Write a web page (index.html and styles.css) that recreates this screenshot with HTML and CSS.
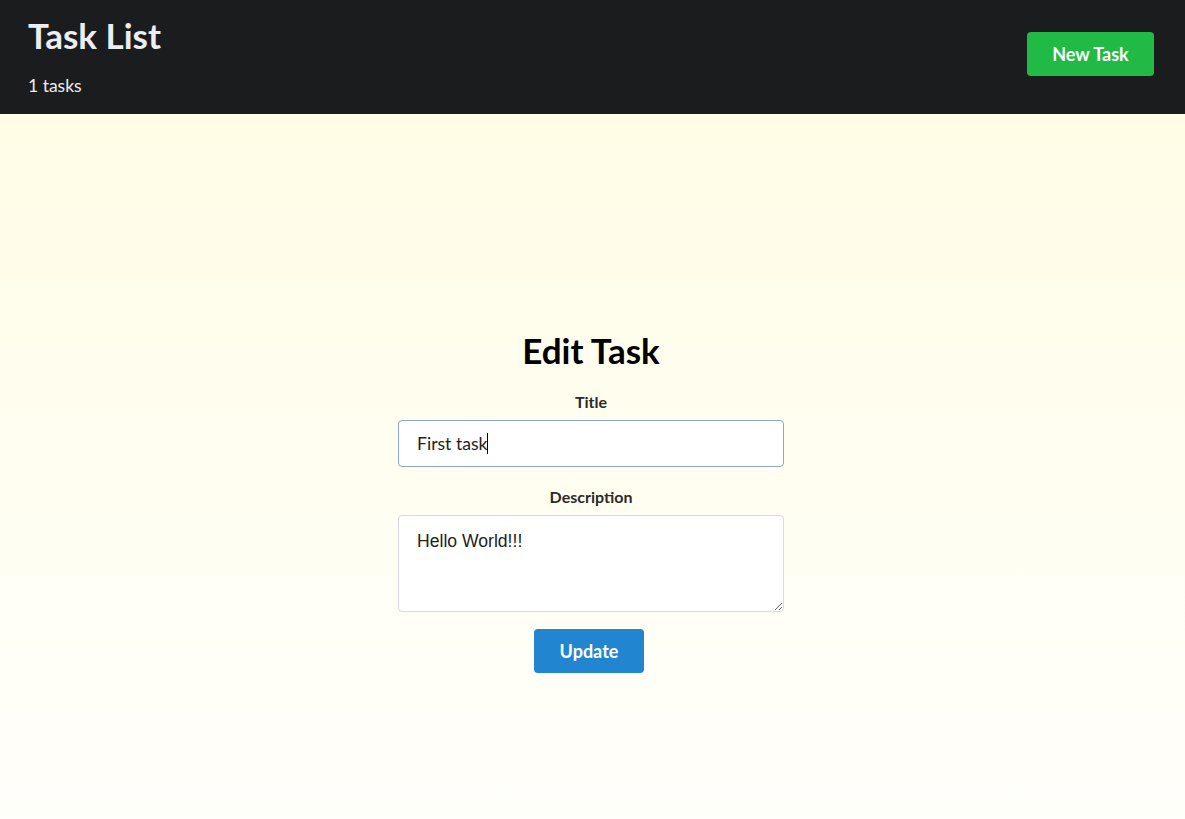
FILE: index.html
```html
<!DOCTYPE html>
<html lang="en">
<head>
<meta charset="utf-8">
<title>Task List</title>
<link rel="stylesheet" href="styles.css">
</head>
<body>
<header class="topbar">
  <div class="brand">
    <h1 class="brand-title">Task List</h1>
    <p class="brand-count">1 tasks</p>
  </div>
  <button class="btn btn-green" type="button">New Task</button>
</header>
<main class="main">
  <form class="edit-form">
    <h2 class="form-title">Edit Task</h2>
    <label class="field-label" for="title">Title</label>
    <div class="input-wrap">
      <input id="title" class="field-input" type="text" value="First task"><span class="caret"></span>
    </div>
    <label class="field-label field-label-spaced" for="desc">Description</label>
    <textarea id="desc" class="field-textarea">Hello World!!!</textarea>
    <button class="btn btn-blue" type="button">Update</button>
  </form>
</main>
</body>
</html>
```
FILE: styles.css
```css
* { box-sizing: border-box; }
html, body { height: 100%; }
body {
  margin: 0;
  font-family: Lato, "Open Sans", sans-serif;
  display: flex;
  flex-direction: column;
  background: #fffffa;
}
.topbar {
  height: 114px;
  flex: none;
  background: #1b1c1e;
  display: flex;
  justify-content: space-between;
  align-items: flex-start;
  padding: 0 31px 0 28px;
}
.brand-title {
  margin: 14px 0 0;
  font-size: 35px;
  font-weight: 700;
  color: #eceef3;
  line-height: 42px;
}
.brand-count {
  margin: 19px 0 0;
  font-size: 17.5px;
  color: #eceef3;
  line-height: 22px;
}
.btn {
  border: none;
  border-radius: 4px;
  color: #fff;
  font-family: Lato, sans-serif;
  font-weight: 700;
  font-size: 18px;
  height: 44px;
  cursor: pointer;
}
.btn-green {
  margin-top: 32px;
  width: 127px;
  background: #21ba45;
}
.btn-blue {
  width: 110px;
  background: #2185d0;
  margin-top: 17px;
  align-self: center;
  position: relative;
  left: -2px;
}
.main {
  flex: 1;
  background: linear-gradient(to bottom, #fffde6, #fffffb);
  display: flex;
  justify-content: center;
  padding: 212px 3px 0 0;
}
.edit-form {
  width: 386px;
  display: flex;
  flex-direction: column;
}
.form-title {
  margin: 0;
  text-align: center;
  font-size: 35px;
  font-weight: 700;
  color: #000;
  line-height: 48px;
}
.field-label {
  display: block;
  text-align: center;
  font-size: 16px;
  font-weight: 700;
  color: #2a2a2a;
  margin-top: 18px;
  line-height: 20px;
  margin-bottom: 8px;
}
.field-label-spaced { margin-top: 20px; }
.input-wrap { position: relative; }
.field-input {
  display: block;
  width: 100%;
  height: 47px;
  border: 1px solid #8ba8c6;
  border-radius: 4px;
  background: #fff;
  padding: 0 18px;
  font-family: Lato, sans-serif;
  font-size: 17.6px;
  color: #222;
  outline: none;
}
.caret {
  position: absolute;
  left: 89px;
  top: 13px;
  width: 1px;
  height: 21px;
  background: #000;
}
.field-textarea {
  display: block;
  width: 100%;
  height: 97px;
  border: 1px solid #d9dadb;
  border-radius: 4px;
  background: #fff;
  padding: 15px 18px;
  font-family: "Liberation Sans", Arial, sans-serif;
  font-size: 17.6px;
  color: #222;
  resize: vertical;
  outline: none;
}
```
